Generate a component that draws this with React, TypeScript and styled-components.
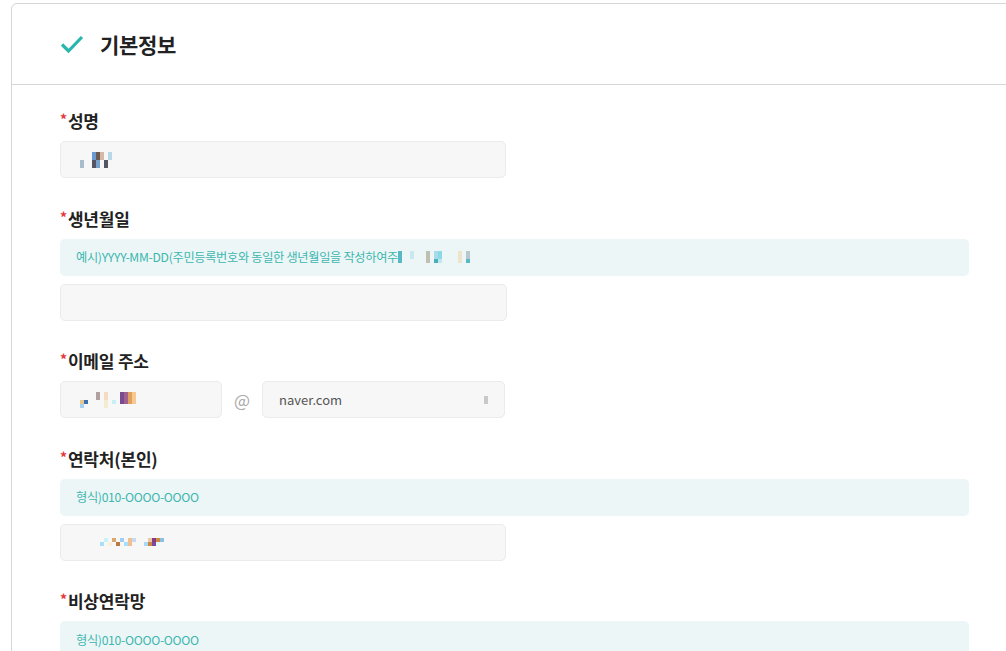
import React from "react";
import styled, { createGlobalStyle } from "styled-components";

const Global = createGlobalStyle`
  html, body { margin: 0; padding: 0; background: #fff; overflow: hidden; }
  body { font-family: "Noto Sans CJK KR", "Noto Sans", sans-serif; }
  * { box-sizing: border-box; }
`;

const Page = styled.div`
  padding: 3px 0 0 11px;
  width: 1006px;
  height: 651px;
  overflow: hidden;
`;

const Card = styled.section`
  width: 1007px;
  border: 1px solid #d6d6d6;
  border-radius: 6px 6px 0 0;
  background: #fff;
  min-height: 700px;
`;

const Header = styled.header`
  height: 81px;
  display: flex;
  align-items: center;
  gap: 16px;
  padding: 0 48px;
  border-bottom: 1px solid #d6d6d6;
`;

const Title = styled.h2`
  margin: 0;
  font-size: 21px;
  font-weight: 700;
  color: #222;
  letter-spacing: -0.3px;
`;

const Body = styled.div`
  padding: 26px 48px 0;
  display: flex;
  flex-direction: column;
  gap: 30.5px;
`;

const Field = styled.div`
  display: flex;
  flex-direction: column;
  gap: 8px;
`;

const Label = styled.label`
  display: flex;
  align-items: flex-start;
  height: 22px;
  line-height: 19px;
  font-size: 17px;
  font-weight: 700;
  color: #222;
  letter-spacing: -0.2px;
`;

const Star = styled.span`
  color: #e8343b;
  font-size: 14px;
  line-height: 16px;
  margin-right: 1px;
`;

const Hint = styled.div`
  height: 37px;
  width: 909px;
  background: #edf6f7;
  border-radius: 5px;
  display: flex;
  align-items: center;
  padding: 0 16px;
  font-size: 12.2px;
  color: #3cb6ae;
  letter-spacing: -0.3px;
`;

const Input = styled.div<{ $w: number }>`
  height: 37px;
  width: ${(p) => p.$w}px;
  background: #f7f7f7;
  border: 1px solid #ebebeb;
  border-radius: 5px;
  display: flex;
  align-items: center;
  justify-content: space-between;
  padding: 0 16px 0 ${(p) => (p.$w < 300 && p.$w > 200 ? 16 : 19)}px;
  font-size: 13px;
  color: #555;
`;

const Row = styled.div`
  display: flex;
  align-items: center;
`;

const At = styled.span`
  width: 40px;
  text-align: center;
  font-size: 17px;
  color: #aaa;
`;

const Pix = styled.span`
  display: inline-grid;
  grid-auto-flow: row;
`;

const PixRow = styled.span`
  display: flex;
`;

const Cell = styled.span<{ $c: string }>`
  width: 4px;
  height: 4px;
  background: ${(p) => p.$c};
`;

const Check = () => (
  <svg width="24" height="18" viewBox="0 0 24 18" fill="none">
    <path d="M2 9.5 L8.5 16 L22 2" stroke="#2bb5ad" strokeWidth="3.2" strokeLinecap="butt" />
  </svg>
);

const Pixels = ({ rows, offset = 0 }: { rows: string[][]; offset?: number }) => (
  <Pix style={{ marginLeft: offset }}>
    {rows.map((r, i) => (
      <PixRow key={i}>
        {r.map((c, j) => (
          <Cell key={j} $c={c || "transparent"} />
        ))}
      </PixRow>
    ))}
  </Pix>
);

const T = "";

export default function App() {
  return (
    <Page>
      <Global />
      <Card>
        <Header>
          <Check />
          <Title>기본정보</Title>
        </Header>
        <Body>
          <Field>
            <Label><Star>*</Star>성명</Label>
            <Input $w={446}>
              <Pixels
                rows={[
                  [T, T, T, "#6a9ad0", "#6b5a50", "#d4b8a8", T, "#b8d8e8"],
                  [T, T, T, "#6a9ad0", "#6b5a50", "#d4b8a8", T, "#b8d8e8"],
                  ["#a8bccc", T, T, "#555566", "#7aa0cc", T, "#555566", T],
                  ["#a8bccc", T, T, "#555566", "#7aa0cc", T, "#555566", T],
                ]}
              />
              <span />
            </Input>
          </Field>
          <Field>
            <Label><Star>*</Star>생년월일</Label>
            <Hint>
              예시)YYYY-MM-DD(주민등록번호와 동일한 생년월일을 작성하여주
              <Pixels
                rows={[
                  ["#5ab8c4", T, T, "#c8e8f0", T, T, T, "#c0c0b0", T, "#a8dce8", "#8ad8e8", T, T, T, T, "#ece4cc", T, "#b8c8d0"],
                  ["#5ab8c4", T, T, "#c8e8f0", T, T, T, "#c0c0b0", T, "#a8dce8", "#8ad8e8", T, T, T, T, "#ece4cc", T, "#b8c8d0"],
                  ["#5ab8c4", T, T, T, T, T, T, "#c0c0b0", T, "#4ab0b8", "#c0e8f0", T, T, T, T, "#ece4cc", T, "#5ab8c4"],
                ]}
              />
            </Hint>
            <Input $w={447} />
          </Field>
          <Field>
            <Label><Star>*</Star>이메일 주소</Label>
            <Row>
              <Input $w={162}>
                <Pixels
                  rows={[
                    [T, T, T, T, "#b0a0a0", T, "#f4dcc0", T, T, T, "#7a4a90", "#a06090", "#e0a060", "#f8c890"],
                    [T, T, T, T, "#b0a0a0", T, "#f4dcc0", T, T, T, "#7a4a90", "#a06090", "#e0a060", "#f8c890"],
                    ["#e8c890", "#3a70b0", T, T, T, T, "#f4ecd0", T, "#c8f0f4", T, "#7a4a90", "#a06090", "#e0a060", "#f8c890"],
                    ["#a8d0f0", T, T, T, T, T, "#f4ecd0", T, T, T, T, T, T, T],
                  ]}
                />
                <span />
              </Input>
              <At>@</At>
              <Input $w={243}>
                <span>naver.com</span>
                <Pixels rows={[["#c8c8c8"], ["#c8c8c8"]]} />
              </Input>
            </Row>
          </Field>
          <Field>
            <Label><Star>*</Star>연락처(본인)</Label>
            <Hint>형식)010-OOOO-OOOO</Hint>
            <Input $w={446}>
              <Pixels
                offset={12}
                rows={[
                  [T, T, T, "#c8f4f8", T, "#d8a870", T, "#a0d0f0", T, "#f0c090", "#c8d8f0", T, T, T, "#e8c8a8", "#8a3a80", "#d08840", "#88c0e8"],
                  [T, T, "#a8e0f8", T, "#f8f0d8", T, "#c07840", T, "#a8e0f8", "#f0c090", T, T, T, "#a8d8f8", "#d08840", "#7a4aa0", "#e8f8f8", T],
                ]}
              />
              <span />
            </Input>
          </Field>
          <Field>
            <Label><Star>*</Star>비상연락망</Label>
            <Hint>형식)010-OOOO-OOOO</Hint>
          </Field>
        </Body>
      </Card>
    </Page>
  );
}
